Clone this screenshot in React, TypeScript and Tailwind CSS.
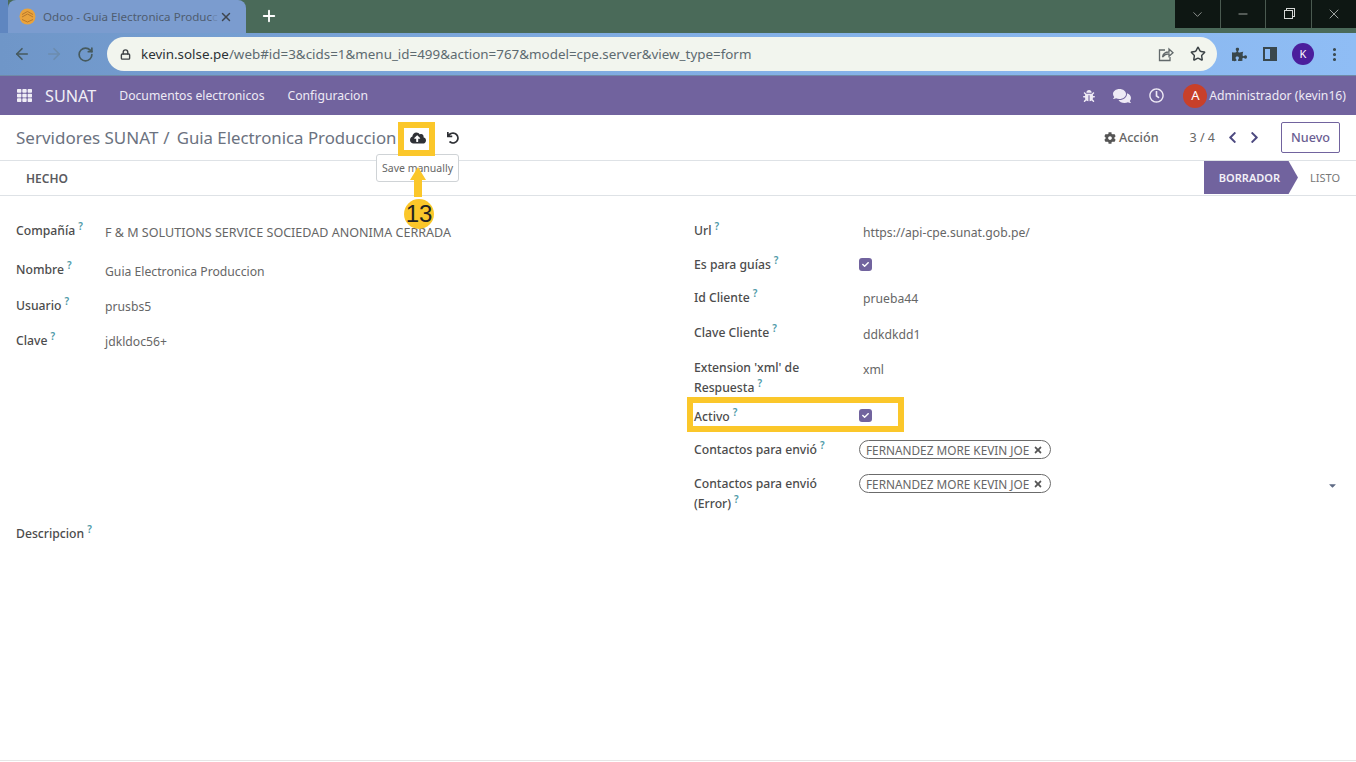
import { ArrowLeft, ArrowRight, RotateCw, Lock, Star, ChevronDown, Minus, X, Plus, EllipsisVertical } from "lucide-react"
import { FaTh, FaBug, FaComments, FaRegClock, FaCog, FaCloudUploadAlt, FaUndo, FaChevronLeft, FaChevronRight, FaTimes, FaCheck, FaPuzzlePiece, FaCaretDown } from "react-icons/fa"

const Help = () => <sup className="ml-[3px] text-[10px] font-semibold text-[#4f9aa8] leading-none">?</sup>

const Check = () => (
  <span className="-ml-[4px] flex h-[13px] w-[13px] items-center justify-center rounded-[3px] bg-[#71639e]">
    <FaCheck className="text-white" size={7} />
  </span>
)

const Tag = ({ text }: { text: string }) => (
  <span className="-ml-[4px] flex h-[19px] w-[192px] items-center gap-[4px] rounded-full border border-[#6b6b6b] pl-[6px] text-[11.8px] text-[#666]">
    <span className="whitespace-nowrap">{text}</span>
    <FaTimes size={10} className="text-[#555]" />
  </span>
)

const Row = ({ label, h, children }: { label: string; h: string; children?: React.ReactNode }) => (
  <div className={`flex ${h}`}>
    <div className="w-[169px] shrink-0 pr-6 text-[12.2px] font-medium leading-[20px] text-[#4c4c4c]">
      {label}
      <Help />
    </div>
    <div className="text-[12.2px] leading-[20px] text-[#666]">{children}</div>
  </div>
)

const LeftRow = ({ label, h, children }: { label: string; h: string; children: React.ReactNode }) => (
  <div className={`flex ${h}`}>
    <div className="w-[89px] shrink-0 text-[12.2px] font-medium leading-[20px] text-[#4c4c4c]">
      {label}
      <Help />
    </div>
    <div className="text-[12.2px] leading-[20px] text-[#666]">{children}</div>
  </div>
)

export default function App() {
  return (
    <div className="relative h-[762px] w-[1356px] overflow-hidden bg-white font-['Noto_Sans',sans-serif]">
      {/* tab strip */}
      <div className="flex h-[33px] bg-[#4a6a59]">
        <div className="mt-0 h-[33px] w-[8px] bg-[#5f86c0]" />
        <div className="flex h-[33px] w-[238px] items-center rounded-t-[8px] bg-[#7b9ccf] pl-[11px] pr-[13px]">
          <svg width="17" height="17" viewBox="0 0 17 17">
            <circle cx="8.5" cy="8.5" r="8" fill="#e9a33c" />
            <path d="M3 6.5 8.5 3.5 14 6.5M3 9 8.5 6 14 9M3 11.5 8.5 14 14 11.5" stroke="#b9782a" strokeWidth="1" fill="none" />
          </svg>
          <span className="ml-[7px] whitespace-nowrap text-[11.6px] text-[#4f5d70]">
            Odoo - Guia Electronica Produc<span className="opacity-30">c</span>
          </span>
          <X size={14} strokeWidth={2.5} className="ml-auto text-[#3f4650]" />
        </div>
        <Plus size={18} strokeWidth={2.5} className="ml-[14px] mt-[7px] text-white" />
        <div className="ml-auto flex h-[28px] w-[181px] bg-[#0e1713] text-[#d5d8d6]">
          <div className="flex flex-1 items-center justify-center border-r border-[#4a5a50]"><ChevronDown size={15} strokeWidth={1} /></div>
          <div className="flex flex-1 items-center justify-center border-r border-[#4a5a50]"><Minus size={14} strokeWidth={1.2} /></div>
          <div className="flex flex-1 items-center justify-center border-r border-[#4a5a50]">
            <span className="relative block h-[9px] w-[9px] border border-[#d5d8d6] bg-[#0e1713] shadow-[2px_-2px_0_-1px_#0e1713,2px_-2px_0_0_#d5d8d6]" />
          </div>
          <div className="flex flex-1 items-center justify-center"><X size={16} strokeWidth={1.1} /></div>
        </div>
      </div>
      {/* toolbar */}
      <div className="flex h-[43px] items-center border-b border-[#6f8aa8] bg-gradient-to-r from-[#6f96c8] via-[#82aee4] to-[#8fbdf5] pl-[13px]">
        <ArrowLeft size={18} strokeWidth={2.2} className="text-[#465a5e]" />
        <ArrowRight size={18} strokeWidth={2.2} className="ml-[14px] text-[#6c8cae]" />
        <RotateCw size={17} strokeWidth={2.4} className="ml-[14px] text-[#465a5e]" />
        <div className="ml-[13px] flex h-[34px] w-[1110px] items-center rounded-full bg-[#f2f5ee] pl-[13px]">
          <Lock size={11} strokeWidth={3} className="text-[#3f4347]" />
          <span className="ml-[10px] whitespace-nowrap text-[13.4px] text-[#5d6a70]">
            <span className="text-[#2c3135]">kevin.solse.pe</span>/web#id=3&amp;cids=1&amp;menu_id=499&amp;action=767&amp;model=cpe.server&amp;view_type=form
          </span>
          <svg className="ml-auto text-[#62696b]" width="16" height="15" viewBox="0 0 16 15" fill="none" stroke="currentColor" strokeWidth="1.3">
            <path d="M7 3H1.5V13.5H12V10" />
            <path d="M4.5 10C5 7 7.5 5 11 5V2L15 5.7 11 9.2V6.8C8.5 6.8 6 8 4.5 10Z" />
          </svg>
          <Star size={16} strokeWidth={2.2} className="ml-[16px] mr-[11px] text-[#3c4346]" />
        </div>
        <FaPuzzlePiece size={15} className="ml-[15px] text-[#39474c]" />
        <span className="ml-[16px] block h-[14px] w-[14px] border-2 border-r-[7px] border-[#39474c]" />
        <span className="ml-[15px] flex h-[22px] w-[22px] items-center justify-center rounded-full bg-[#4b1e9c] text-[11px] text-white">K</span>
        <EllipsisVertical size={17} strokeWidth={2.4} className="ml-[12px] text-[#39474c]" />
      </div>
      {/* navbar */}
      <div className="flex h-[39px] items-center bg-[#71639e] pl-[17px] pr-[10px] text-white">
        <FaTh size={15} className="text-[#f0eef6]" />
        <span className="ml-[13px] pt-[1px] text-[16.2px] text-[#f0eef6]">SUNAT</span>
        <span className="ml-[23px] pt-[2px] text-[12.2px] text-[#eeeaf5]">Documentos electronicos</span>
        <span className="ml-[23px] pt-[2px] text-[12.2px] text-[#eeeaf5]">Configuracion</span>
        <FaBug size={12} className="ml-auto text-[#eeeaf5]" />
        <FaComments size={18} className="ml-[18px] text-[#eeeaf5]" />
        <FaRegClock size={15} className="ml-[18px] text-[#eeeaf5]" />
        <span className="ml-[19px] flex h-[24px] w-[24px] items-center justify-center rounded-full bg-[#c8402a] text-[13px] text-white">A</span>
        <span className="ml-[2px] pt-[1px] whitespace-nowrap text-[12.2px] text-[#eeeaf5]">Administrador (kevin16)</span>
      </div>
      {/* control panel */}
      <div className="flex h-[46px] items-center border-b border-[#dee2e6] pl-[16px] pr-[16px]">
        <span className="whitespace-nowrap text-[17px] text-[#6b7280]">Servidores SUNAT</span>
        <span className="ml-[5px] whitespace-nowrap text-[17px] text-[#6b7280]">/</span>
        <span className="ml-[7px] whitespace-nowrap text-[16.8px] text-[#6b7280]">Guia Electronica Produccion</span>
        <FaCloudUploadAlt size={16} className="ml-[14px] text-[#2f3136]" />
        <FaUndo size={12} className="ml-[21px] text-[#2f3136]" />
        <FaCog size={12} className="ml-auto text-[#555]" />
        <span className="ml-[3px] pt-[2px] text-[12.6px] font-medium text-[#666]">Acción</span>
        <span className="ml-[31px] pt-[2px] text-[12.5px] text-[#666]">3 / 4</span>
        <FaChevronLeft size={13} className="ml-[11px] text-[#4d4a80]" />
        <FaChevronRight size={13} className="ml-[9px] text-[#4d4a80]" />
        <span className="ml-[20px] flex h-[31px] w-[59px] items-center justify-center rounded-[2px] border border-[#71639e] pt-[2px] text-[12.6px] font-medium text-[#6a5e92]">Nuevo</span>
      </div>
      {/* status bar */}
      <div className="flex h-[35px] items-start border-b border-[#dee2e6] pl-[26px]">
        <span className="mt-[9px] text-[12px] font-semibold text-[#5a5a60]">HECHO</span>
        <div className="ml-auto flex h-[33px] items-center">
          <div className="flex h-[33px] w-[94px] items-center justify-center bg-[#71639e] pr-[3px] pt-[1px] text-[11px] font-semibold text-[#f2f0f7] [clip-path:polygon(0_0,90%_0,100%_50%,90%_100%,0_100%)]">BORRADOR</div>
          <span className="ml-[12px] mr-[16px] pt-[1px] text-[11px] text-[#777]">LISTO</span>
        </div>
      </div>
      {/* form */}
      <div className="flex pt-[25px]">
        <div className="ml-[16px] w-[678px]">
          <LeftRow label="Compañía" h="h-[39px]">
            <div className="pt-[2px] text-[12.55px]">F &amp; M SOLUTIONS SERVICE SOCIEDAD ANONIMA CERRADA</div>
          </LeftRow>
          <LeftRow label="Nombre" h="h-[36px]">
            <div className="pt-[2px]">Guia Electronica Produccion</div>
          </LeftRow>
          <LeftRow label="Usuario" h="h-[35px]">
            <div className="pt-[1px]">prusbs5</div>
          </LeftRow>
          <LeftRow label="Clave" h="h-[193px]">
            <div className="pt-[1px]">jdkldoc56+</div>
          </LeftRow>
          <div className="text-[12.2px] font-medium leading-[20px] text-[#4c4c4c]">
            Descripcion
            <Help />
          </div>
        </div>
        <div className="flex-1">
          <Row label="Url" h="h-[34px]"><div className="pt-[2px]">https://api-cpe.sunat.gob.pe/</div></Row>
          <Row label="Es para guías" h="h-[33px]">
            <div className="pt-[3px]"><Check /></div>
          </Row>
          <Row label="Id Cliente" h="h-[35px]"><div className="pt-[1px]">prueba44</div></Row>
          <Row label="Clave Cliente" h="h-[35px]"><div className="pt-[2px]">ddkdkdd1</div></Row>
          <Row label="Extension 'xml' de Respuesta" h="h-[49px]"><div className="pt-[2px]">xml</div></Row>
          <Row label="Activo" h="h-[33px]">
            <div className="pt-[2px]"><Check /></div>
          </Row>
          <Row label="Contactos para envió" h="h-[34px]">
            <Tag text="FERNANDEZ MORE KEVIN JOE" />
          </Row>
          <div className="relative">
            <Row label="Contactos para envió (Error)" h="h-[40px]">
              <Tag text="FERNANDEZ MORE KEVIN JOE" />
            </Row>
            <FaCaretDown size={11} className="absolute right-[18px] top-[6px] text-[#5f6b85]" />
          </div>
        </div>
      </div>
      <div className="absolute bottom-[1px] left-0 h-px w-full bg-[#e6e6e6]" />

      {/* tooltip and tutorial annotations */}
      <div className="absolute left-[376px] top-[154px] flex h-[28px] w-[83px] items-center justify-center rounded-[3px] border border-[#cfd3d6] bg-white pt-[2px] text-[10.5px] text-[#666] whitespace-nowrap">Save manually</div>
      <div className="absolute left-[398px] top-[122px] h-[34px] w-[37px] border-[6px] border-[#fbc72a]" />
      <div className="absolute left-[687px] top-[397px] h-[35px] w-[217px] border-[6px] border-[#fbc72a]" />
      <svg className="absolute left-[410px] top-[166px]" width="16" height="32" viewBox="0 0 16 32">
        <path d="M8 1 16 14H12V31H4V14H0Z" fill="#fbc72a" />
      </svg>
      <div className="absolute left-[404px] top-[199px] flex h-[30px] w-[30px] items-center justify-center rounded-full bg-[#fbc72a] font-['Liberation_Sans',sans-serif] text-[24px] text-[#222]">13</div>
    </div>
  )
}
